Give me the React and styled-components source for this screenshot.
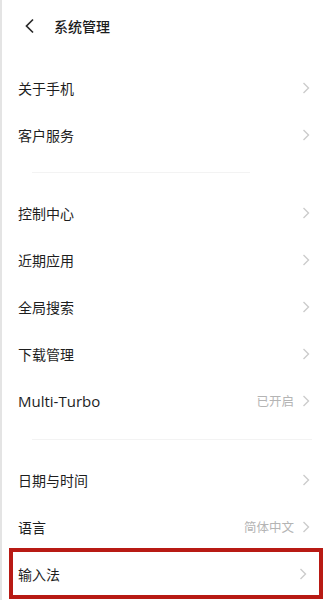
import styled, { createGlobalStyle } from "styled-components";

const GlobalStyle = createGlobalStyle`
  body {
    margin: 0;
    background: #ffffff;
    font-family: "Noto Sans CJK SC", "Noto Sans", "Liberation Sans", sans-serif;
  }
`;

const Page = styled.div`
  width: 326px;
  height: 600px;
  box-sizing: border-box;
  border-left: 2px solid #e4e4e4;
  background: #ffffff;
  overflow: hidden;
`;

const Header = styled.header`
  height: 52px;
  display: flex;
  align-items: center;
  padding-left: 22px;
  gap: 18px;
`;

const BackButton = styled.button`
  background: none;
  border: none;
  padding: 0;
  display: flex;
  cursor: pointer;
`;

const Title = styled.h1`
  margin: 0;
  font-size: 14px;
  font-weight: 500;
  color: #1c1c1c;
`;

const Section = styled.section`
  padding-top: ${(p) => p.$top || 0}px;
`;

const Divider = styled.div`
  height: 1px;
  background: #f3f3f3;
  margin: ${(p) => p.$above}px ${(p) => p.$right}px ${(p) => p.$below}px 30px;
`;

const Row = styled.div`
  height: 47px;
  display: flex;
  align-items: center;
  justify-content: space-between;
  padding: 0 16px 0 16px;
  box-sizing: border-box;
  ${(p) =>
    p.$marked &&
    `
    height: 51px;
    margin: -2px 3px 0 7px;
    padding: 0 12px 0 5px;
    border: 4px solid #b81a14;
  `}
`;

const Label = styled.span`
  font-size: ${(p) => (p.$latin ? 15 : 14)}px;
  color: #1e1e1e;
  font-family: ${(p) =>
    p.$latin
      ? `"Open Sans", "Noto Sans", "Liberation Sans", sans-serif`
      : `"Noto Sans CJK SC", "Noto Sans", sans-serif`};
`;

const Trail = styled.span`
  display: flex;
  align-items: center;
  gap: 8px;
`;

const Value = styled.span`
  font-size: 12.5px;
  color: #b4b4b4;
`;

const Chevron = () => (
  <svg width="8" height="12" viewBox="0 0 8 12" fill="none">
    <path d="M1.5 1 L6.5 6 L1.5 11" stroke="#cccccc" strokeWidth="1.4" />
  </svg>
);

const BackIcon = () => (
  <svg width="12" height="16" viewBox="0 0 12 16" fill="none">
    <path d="M9 1.5 L2.5 8 L9 14.5" stroke="#2a2a2a" strokeWidth="1.7" />
  </svg>
);

const Item = ({ label, value, latin, marked }) => (
  <Row $marked={marked}>
    <Label $latin={latin}>{label}</Label>
    <Trail>
      {value && <Value>{value}</Value>}
      <Chevron />
    </Trail>
  </Row>
);

export default function App() {
  return (
    <>
      <GlobalStyle />
      <Page>
        <Header>
          <BackButton>
            <BackIcon />
          </BackButton>
          <Title>系统管理</Title>
        </Header>
        <Section $top={12}>
          <Item label="关于手机" />
          <Item label="客户服务" />
        </Section>
        <Divider $above={14} $below={16} $right={76} />
        <Section>
          <Item label="控制中心" />
          <Item label="近期应用" />
          <Item label="全局搜索" />
          <Item label="下载管理" />
          <Item label="Multi-Turbo" latin value="已开启" />
        </Section>
        <Divider $above={15} $below={16} $right={14} />
        <Section>
          <Item label="日期与时间" />
          <Item label="语言" value="简体中文" />
          <Item label="输入法" marked />
        </Section>
      </Page>
    </>
  );
}
